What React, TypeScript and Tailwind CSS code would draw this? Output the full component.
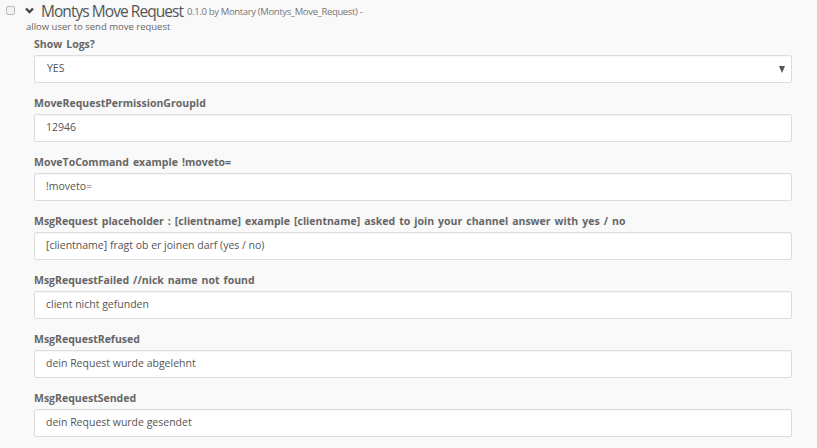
const fields = [
  { label: "MoveRequestPermissionGroupId", value: "12946" },
  { label: "MoveToCommand example !moveto=", value: "!moveto=" },
  {
    label:
      "MsgRequest placeholder : [clientname] example [clientname] asked to join your channel answer with yes / no",
    value: "[clientname] fragt ob er joinen darf (yes / no)",
  },
  { label: "MsgRequestFailed //nick name not found", value: "client nicht gefunden" },
  { label: "MsgRequestRefused", value: "dein Request wurde abgelehnt" },
  { label: "MsgRequestSended", value: "dein Request wurde gesendet" },
];

function Label({ children }: { children: React.ReactNode }) {
  return (
    <div className="h-[16px] leading-[16px] mb-[3px] text-[10.5px] font-bold text-[#666] [word-spacing:1.3px]">
      {children}
    </div>
  );
}

export default function App() {
  return (
    <div
      className="w-[817px] h-[448px] overflow-hidden bg-[#f9f9f9] text-[#555]"
      style={{ fontFamily: '"Open Sans", "Liberation Sans", sans-serif' }}
    >
      {/* Header */}
      <div className="flex items-center h-[20px] pt-[1px]">
        <div className="ml-[6px] w-[9px] h-[9px] rounded-[2px] border border-[#bbb] bg-[#f2f2f2]" />
        <svg className="ml-[10px] w-[9px] h-[7px]" viewBox="0 0 9 7">
          <path d="M1 1.5 L4.5 5 L8 1.5" fill="none" stroke="#444" strokeWidth="2.4" />
        </svg>
        <span className="ml-[7px] text-[15.5px] leading-[20px] tracking-[-0.95px] text-[#555]">
          Montys Move Request
        </span>
        <span className="ml-[4px] mt-[3px] text-[9.5px] tracking-[-0.35px] text-[#777]">
          0.1.0 by Montary (Montys_Move_Request) -
        </span>
      </div>
      <div className="ml-[26px] h-[14px] leading-[14px] text-[9.5px] text-[#666]">
        allow user to send move request
      </div>

      <div className="pl-[34px] pr-[25px] pt-[2px]">
        <div className="mb-[12px]">
          <Label>Show Logs?</Label>
          <div className="relative h-[28px] flex items-center bg-white border border-[#ddd] rounded-[2px] shadow-[inset_0_1px_1px_rgba(0,0,0,0.04)]">
            <span className="pl-[12px] text-[10.5px] text-[#555]">YES</span>
            <span className="absolute right-[6px] top-[10px] w-0 h-0 border-l-[3.5px] border-r-[3.5px] border-t-[7px] border-l-transparent border-r-transparent border-t-[#555]" />
          </div>
        </div>
        {fields.map((f, i) => (
          <div key={i} className="mb-[12px]">
            <Label>{f.label}</Label>
            <div className="h-[28px] flex items-center bg-white border border-[#ddd] rounded-[2px] shadow-[inset_0_1px_1px_rgba(0,0,0,0.04)]">
              <span className="pl-[11px] text-[10.5px] text-[#555]">{f.value}</span>
            </div>
          </div>
        ))}
      </div>
    </div>
  );
}
